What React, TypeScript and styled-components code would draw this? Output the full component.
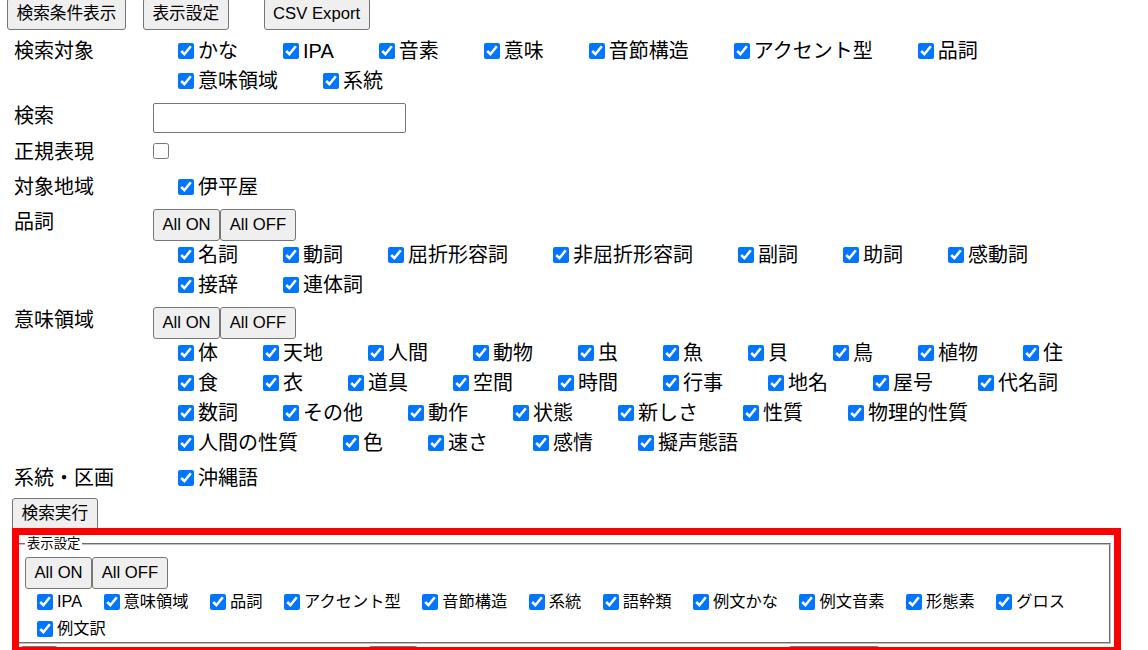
import React from "react";
import styled, { createGlobalStyle } from "styled-components";

const GlobalStyle = createGlobalStyle`
  html, body {
    margin: 0;
    padding: 0;
    background: #ffffff;
    overflow: hidden;
  }
  body {
    font-family: "Liberation Sans", "Noto Sans CJK JP", sans-serif;
    font-size: 20px;
    color: #000000;
  }
`;

const Page = styled.div`
  width: 1148px;
  height: 650px;
  overflow: hidden;
`;

const TopBar = styled.div`
  display: flex;
  align-items: flex-start;
  height: 32px;
  margin-top: -2px;
  padding-left: 7px;
`;

const Button = styled.button<{ $ml?: number; $w?: number }>`
  box-sizing: border-box;
  height: 32px;
  ${(p) => (p.$w ? `width: ${p.$w}px;` : "")}
  margin: 0 0 0 ${(p) => p.$ml ?? 0}px;
  padding: 0 8.5px;
  font-family: "Liberation Sans", "Noto Sans CJK JP", sans-serif;
  font-size: 16.67px;
  line-height: 1;
  color: #000000;
  background: #efefef;
  border: 1px solid #767676;
  border-radius: 3px;
  white-space: nowrap;
  flex: none;
`;

const Form = styled.div`
  display: grid;
  grid-template-columns: 139px 947px;
  row-gap: 5px;
  margin: 6px 0 0 14px;
`;

const Label = styled.div<{ $lh?: number }>`
  font-size: 20px;
  line-height: ${(p) => p.$lh ?? 30}px;
  white-space: nowrap;
`;

const Cell = styled.div<{ $pt?: number }>`
  min-width: 0;
  padding-top: ${(p) => p.$pt ?? 0}px;
`;

const CheckList = styled.div<{ $small?: boolean }>`
  display: flex;
  flex-wrap: wrap;
  column-gap: ${(p) => (p.$small ? 21.5 : 45)}px;
  padding-left: ${(p) => (p.$small ? 12 : 25)}px;
  line-height: ${(p) => (p.$small ? 27 : 30)}px;
  font-size: ${(p) => (p.$small ? 16.25 : 20)}px;
`;

const Item = styled.label`
  display: inline-flex;
  align-items: center;
  gap: 4px;
  white-space: nowrap;
`;

const Check = styled.input.attrs({ type: "checkbox" })`
  width: 16px;
  height: 16px;
  margin: 0;
  flex: none;
`;

const LoneCheck = styled(Check)`
  display: block;
`;

const TextInput = styled.input.attrs({ type: "text" })`
  box-sizing: border-box;
  display: block;
  width: 253px;
  height: 30px;
  margin: 2px 0 0 0;
  padding: 1px 3px;
  font-size: 16.67px;
  border: 1px solid #767676;
  border-radius: 2px;
  background: #ffffff;
`;

const ButtonGroup = styled.div`
  display: flex;
  align-items: flex-start;
  height: 33px;
  padding-top: 2px;
  box-sizing: border-box;
`;

const SubmitRow = styled.div`
  margin: 5px 0 0 12px;
  height: 32px;
`;

const HighlightArea = styled.div`
  position: relative;
  margin: 5px 0 0 12px;
  width: 1099px;
`;

const Fieldset = styled.fieldset`
  margin: 0;
  padding: 2px 11px 0 11px;
  border: 2px groove #c0c0c0;
  min-width: 0;
`;

const Legend = styled.legend`
  font-size: 13.33px;
  line-height: 18px;
  padding: 0 2px;
`;

const PagerRow = styled.div`
  display: flex;
  align-items: flex-start;
  margin-top: 2px;
  padding-left: 8px;
`;

const Highlight = styled.div`
  position: absolute;
  top: -7px;
  left: 0;
  width: 1109px;
  height: 126px;
  box-sizing: border-box;
  border: 7px solid #ff0000;
  pointer-events: none;
  z-index: 2;
`;

const targets = ["かな", "IPA", "音素", "意味", "音節構造", "アクセント型", "品詞", "意味領域", "系統"];
const regions = ["伊平屋"];
const pos = ["名詞", "動詞", "屈折形容詞", "非屈折形容詞", "副詞", "助詞", "感動詞", "接辞", "連体詞"];
const domains = [
  "体", "天地", "人間", "動物", "虫", "魚", "貝", "鳥", "植物", "住",
  "食", "衣", "道具", "空間", "時間", "行事", "地名", "屋号", "代名詞",
  "数詞", "その他", "動作", "状態", "新しさ", "性質", "物理的性質",
  "人間の性質", "色", "速さ", "感情", "擬声態語",
];
const lineages = ["沖縄語"];
const display = ["IPA", "意味領域", "品詞", "アクセント型", "音節構造", "系統", "語幹類", "例文かな", "例文音素", "形態素", "グロス", "例文訳"];

function Checks({ items, small }: { items: string[]; small?: boolean }) {
  return (
    <CheckList $small={small}>
      {items.map((t) => (
        <Item key={t}>
          <Check defaultChecked />
          <span>{t}</span>
        </Item>
      ))}
    </CheckList>
  );
}

function AllButtons() {
  return (
    <ButtonGroup>
      <Button>All ON</Button>
      <Button>All OFF</Button>
    </ButtonGroup>
  );
}

export default function App() {
  return (
    <Page>
      <GlobalStyle />
      <TopBar>
        <Button>検索条件表示</Button>
        <Button $ml={17}>表示設定</Button>
        <Button $ml={35}>CSV Export</Button>
      </TopBar>

      <Form>
        <Label>検索対象</Label>
        <Cell>
          <Checks items={targets} />
        </Cell>

        <Label>検索</Label>
        <Cell>
          <TextInput />
        </Cell>

        <Label $lh={29}>正規表現</Label>
        <Cell $pt={5}>
          <LoneCheck />
        </Cell>

        <Label>対象地域</Label>
        <Cell>
          <Checks items={regions} />
        </Cell>

        <Label>品詞</Label>
        <Cell>
          <AllButtons />
          <Checks items={pos} />
        </Cell>

        <Label>意味領域</Label>
        <Cell>
          <AllButtons />
          <Checks items={domains} />
        </Cell>

        <Label>系統・区画</Label>
        <Cell>
          <Checks items={lineages} />
        </Cell>
      </Form>

      <SubmitRow>
        <Button>検索実行</Button>
      </SubmitRow>

      <HighlightArea>
        <Fieldset>
          <Legend>表示設定</Legend>
          <ButtonGroup>
            <Button>All ON</Button>
            <Button>All OFF</Button>
          </ButtonGroup>
          <Checks items={display} small />
        </Fieldset>
        <PagerRow>
          <Button $w={38} aria-label="first" />
          <Button $w={50} $ml={310} aria-label="prev" />
          <Button $w={92} $ml={370} aria-label="next" />
        </PagerRow>
        <Highlight />
      </HighlightArea>
    </Page>
  );
}
